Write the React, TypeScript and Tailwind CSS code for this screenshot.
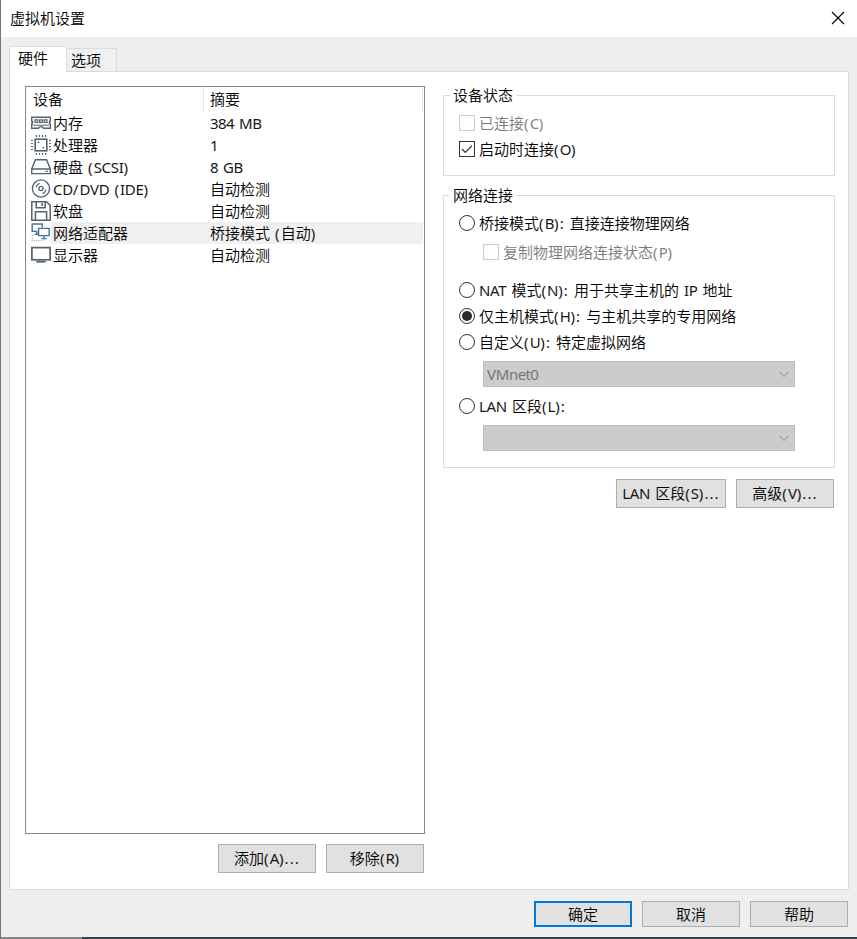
import clsx from "clsx";
import { type ReactNode } from "react";

interface Device {
  name: string;
  summary: string;
  icon: ReactNode;
  selected?: boolean;
}

const devices: Device[] = [
  { name: "内存", summary: "384 MB", icon: <MemoryIcon /> },
  { name: "处理器", summary: "1", icon: <CpuIcon /> },
  { name: "硬盘 (SCSI)", summary: "8 GB", icon: <DiskIcon /> },
  { name: "CD/DVD (IDE)", summary: "自动检测", icon: <CdIcon /> },
  { name: "软盘", summary: "自动检测", icon: <FloppyIcon /> },
  {
    name: "网络适配器",
    summary: "桥接模式 (自动)",
    icon: <NetworkIcon />,
    selected: true,
  },
  { name: "显示器", summary: "自动检测", icon: <DisplayIcon /> },
];

function Icon({ children }: { children: ReactNode }) {
  return (
    <svg
      width="20"
      height="22"
      viewBox="0 0 20 22"
      fill="none"
      stroke="#55636e"
      strokeWidth="1.4"
      className="shrink-0"
    >
      {children}
    </svg>
  );
}

function MemoryIcon() {
  return (
    <Icon>
      <path d="M.7 5.2h18.6v4.2h-.8v2.2h.8v4.6h-6.8l-1-1.3h-3l-1 1.3H.7v-4.6h.8V9.4H.7z" />
      <path d="M4 7.9h2.8v2.5H4zM8.6 7.9h2.8v2.5H8.6zM13.2 7.9H16v2.5h-2.8z" strokeWidth="1.2" />
      <path d="M2 13.2h16" strokeWidth="1" />
    </Icon>
  );
}

function CpuIcon() {
  return (
    <Icon>
      <rect x="4.2" y="5.2" width="11.6" height="11.6" strokeWidth="1.6" />
      <path
        d="M4.8 2h10.8M4.8 20h10.8M1 5.8v10.8M19 5.8v10.8"
        strokeWidth="1.8"
        strokeDasharray="1.2 1.9"
      />
      <path d="M6.8 8.2h1.6M11.6 13.8h1.6" strokeWidth="1.6" />
    </Icon>
  );
}

function DiskIcon() {
  return (
    <Icon>
      <path d="M4.4 3.7h11.2L19.3 13v4.6H.7V13z" />
      <path d="M.7 13h18.6M14.6 15.4h2.2" />
    </Icon>
  );
}

function CdIcon() {
  return (
    <Icon>
      <circle cx="10" cy="10.5" r="8.6" />
      <circle cx="10" cy="10.5" r="2.1" />
      <path d="M5 9.4a5.4 5.4 0 0 1 3.6-4M15 11.6a5.4 5.4 0 0 1-3.6 4" strokeWidth="1.2" />
    </Icon>
  );
}

function FloppyIcon() {
  return (
    <Icon>
      <path d="M.8 1.8h14.8l3.6 3.6v14.8H.8z" strokeWidth="1.5" />
      <path d="M5.2 1.8v6h9V1.8M11.2 3v3M4.4 20v-8.2h11.2V20" strokeWidth="1.5" />
    </Icon>
  );
}

function NetworkIcon() {
  return (
    <Icon>
      <g stroke="#3f759e">
        <path d="M6.4 9.4H1.2V2h10v3.6M5.8 9.4v2.6M3.6 12.2h4" />
        <path d="M7.6 6.4h10.6v7.2H7.6zM13 13.6v2.8M10.2 16.6h5.4" />
      </g>
      <path
        d="M1.2 13v5.8h11.4"
        stroke="#8d979e"
        strokeWidth="1"
        strokeDasharray="1.2 1.2"
      />
    </Icon>
  );
}

function DisplayIcon() {
  return (
    <Icon>
      <rect x=".9" y="3.6" width="18.2" height="12.2" strokeWidth="1.7" />
      <path d="M5.4 17.7h9.2" strokeWidth="1.8" />
    </Icon>
  );
}

function CheckBox({ checked, disabled }: { checked?: boolean; disabled?: boolean }) {
  return (
    <span
      className={clsx(
        "flex size-4 shrink-0 items-center justify-center border",
        disabled ? "border-[#cccccc]" : "border-[#333333]"
      )}
    >
      {checked && (
        <svg width="14" height="14" viewBox="0 0 14 14" fill="none" stroke="#333333" strokeWidth="1.3">
          <path d="M2 7l3.3 3.4L12 3.6" />
        </svg>
      )}
    </span>
  );
}

function Radio({ checked }: { checked?: boolean }) {
  return (
    <span className="flex size-4 shrink-0 items-center justify-center rounded-full border border-[#333333]">
      {checked && <span className="size-2.5 rounded-full bg-[#2b2b2b]" />}
    </span>
  );
}

interface OptionProps {
  label: string;
  control: ReactNode;
  className?: string;
}

function Option({ label, control, className }: OptionProps) {
  return (
    <label className={clsx("flex h-[26px] items-center gap-1", className)}>
      {control}
      <Label text={label} />
    </label>
  );
}

function latinSpacing(run: string) {
  if (/^[a-z0-9]/.test(run)) return "tracking-[-0.6px]";
  if (/^[A-Z]/.test(run)) return "tracking-[-0.3px]";
  return "tracking-[1.1px]";
}

// Latin letters run a little tight, with looser punctuation
function Label({ text }: { text: string }) {
  return (
    <span className="whitespace-pre">
      {text.split(/([A-Z]+|[a-z0-9]+|[ ().,:/]+)/).map((part, i) =>
        i % 2 ? (
          <span key={i} className={clsx("font-normal opacity-90", latinSpacing(part))}>
            {part}
          </span>
        ) : (
          part
        )
      )}
    </span>
  );
}

function Combo({ value = "" }: { value?: string }) {
  return (
    <div className="ml-6 flex h-[26px] w-[312px] items-center justify-between border border-[#bfbfbf] bg-[#cccccc] pr-1 pl-[3px] text-[#6d6d6d]">
      <Label text={value} />
      <svg width="12" height="8" viewBox="0 0 12 8" fill="none" stroke="#a0a0a0" strokeWidth="1.1">
        <path d="M1.5 2L6 6.5 10.5 2" />
      </svg>
    </div>
  );
}

function Button({ label, className }: { label: string; className?: string }) {
  return (
    <button
      className={clsx(
        "flex items-center justify-center bg-[#e1e1e1]",
        className ?? "h-[26px] w-[98px] border border-[#adadad]"
      )}
    >
      <Label text={label} />
    </button>
  );
}

function Group({ title, className, children }: { title: string; className: string; children: ReactNode }) {
  return (
    <section className={clsx("w-[392px] border border-[#dcdcdc] pl-[15px]", className)}>
      <h2 className="-mt-3 -ml-[9px] h-[22px] w-fit bg-white px-[3px] leading-[22px] font-[350]">{title}</h2>
      {children}
    </section>
  );
}

export default function App() {
  return (
    <div className="flex h-[939px] w-[857px] flex-col overflow-hidden border-l border-[#777777] bg-[#efefef] font-['Noto_Sans','Noto_Sans_CJK_SC',sans-serif] text-[15px] leading-[22px] font-[350] text-black">
      <header className="flex h-[37px] shrink-0 items-center justify-between bg-white pr-3 pl-[9px]">
        <h1 className="pb-0.5 font-[350]">虚拟机设置</h1>
        <svg width="14" height="14" viewBox="0 0 14 14" fill="none" stroke="#000" strokeWidth="1.1" className="mb-0.5">
          <path d="M1 1l12 12M13 1L1 13" />
        </svg>
      </header>

      <nav className="z-10 mt-[9px] -mb-px ml-2 flex h-[26px] shrink-0 items-end">
        <div className="h-[26px] w-[58px] border border-b-0 border-[#dcdcdc] bg-white pl-2">硬件</div>
        <div className="h-6 w-[50px] border border-l-0 border-[#dcdcdc] bg-[#f0f0f0] pl-1">选项</div>
      </nav>

      <main className="ml-2 flex h-[819px] w-[840px] shrink-0 border border-[#dcdcdc] bg-white pt-[14px] pl-[15px]">
        <div className="w-[400px]">
          <div className="h-[748px] border border-[#828790]">
            <div className="flex h-[25px] pr-px">
              <div className="w-[178px] border-r border-[#e5e5e5] pt-px pl-[7px]">设备</div>
              <div className="flex-1 border-r border-[#e5e5e5] pt-px pl-1.5">摘要</div>
            </div>
            {devices.map((device) => (
              <div key={device.name} className="flex h-[22px] items-center pl-[5px]">
                {device.icon}
                <div
                  className={clsx(
                    "mr-px flex h-[22px] flex-1 items-center pl-[2px]",
                    device.selected && "bg-[#f0f0f0]"
                  )}
                >
                  <span className="w-[157px]">
                    <Label text={device.name} />
                  </span>
                  <Label text={device.summary} />
                </div>
              </div>
            ))}
          </div>
          <div className="mt-[10px] flex justify-end gap-[10px] pr-px">
            <Button label="添加(A)..." className="h-[29px] w-[98px] border border-[#adadad] pb-px" />
            <Button label="移除(R)" className="h-[29px] w-[98px] border border-[#adadad] pb-px" />
          </div>
        </div>

        <div className="ml-[18px] pt-[9px]">
          <Group title="设备状态" className="h-[81px]">
            <Option
              label="已连接(C)"
              control={<CheckBox disabled />}
              className="mt-1 text-[#7a7a7a]"
            />
            <Option label="启动时连接(O)" control={<CheckBox checked />} />
          </Group>

          <Group title="网络连接" className="mt-[19px] h-[273px]">
            <Option label="桥接模式(B): 直接连接物理网络" control={<Radio />} className="mt-1" />
            <Option
              label="复制物理网络连接状态(P)"
              control={<CheckBox disabled />}
              className="mt-[3px] ml-6 text-[#7a7a7a]"
            />
            <Option label="NAT 模式(N): 用于共享主机的 IP 地址" control={<Radio />} className="mt-3" />
            <Option label="仅主机模式(H): 与主机共享的专用网络" control={<Radio checked />} />
            <Option label="自定义(U): 特定虚拟网络" control={<Radio />} />
            <div className="mt-[6px]">
              <Combo value="VMnet0" />
            </div>
            <Option label="LAN 区段(L):" control={<Radio />} className="mt-[6px]" />
            <div className="mt-[6px]">
              <Combo />
            </div>
          </Group>

          <div className="mt-[11px] flex justify-end gap-[10px] pr-px">
            <Button label="LAN 区段(S)..." className="h-[29px] w-[110px] border border-[#adadad] pb-px" />
            <Button label="高级(V)..." className="h-[29px] w-[98px] border border-[#adadad] pb-px" />
          </div>
        </div>
      </main>

      <footer className="mt-[11px] flex shrink-0 justify-end gap-[10px] pr-[9px]">
        <Button label="确定" className="h-[26px] w-[98px] border-2 border-[#0078d7]" />
        <Button label="取消" />
        <Button label="帮助" />
      </footer>

      <div className="mt-[10px] flex h-0.5 shrink-0">
        <div className="w-[81px] bg-[#858585]" />
        <div className="flex-1 bg-[#3a424a]" />
      </div>
    </div>
  );
}
